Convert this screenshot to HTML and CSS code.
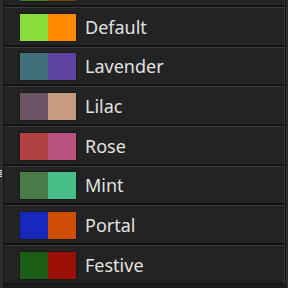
FILE: index.html
```html
<!doctype html>
<html lang="en">
  <head>
    <meta charset="UTF-8" />
    <title>Theme presets</title>
    <link rel="stylesheet" href="styles.css">
  </head>
  <body>
    <div class="panel">
      <div class="gutter">
        <span class="grip"></span>
      </div>
      <div class="preset-list">
        <!-- row scrolled mostly out of view, only its swatch edge shows -->
        <div class="preset dim">
          <div class="swatch">
            <span style="background:#4f7a24"></span>
            <span style="background:#7d4a0c"></span>
          </div>
        </div>
        <div class="preset">
          <div class="swatch">
            <span style="background:#8ade3b"></span>
            <span style="background:#ff8a00"></span>
          </div>
          <span class="preset-name">Default</span>
        </div>
        <div class="preset">
          <div class="swatch">
            <span style="background:#41707b"></span>
            <span style="background:#5f43a3"></span>
          </div>
          <span class="preset-name">Lavender</span>
        </div>
        <div class="preset">
          <div class="swatch">
            <span style="background:#6b5565"></span>
            <span style="background:#c49c80"></span>
          </div>
          <span class="preset-name">Lilac</span>
        </div>
        <div class="preset">
          <div class="swatch">
            <span style="background:#b14241"></span>
            <span style="background:#b8517e"></span>
          </div>
          <span class="preset-name">Rose</span>
        </div>
        <div class="preset">
          <div class="swatch">
            <span style="background:#4b7a49"></span>
            <span style="background:#47bd87"></span>
          </div>
          <span class="preset-name">Mint</span>
        </div>
        <div class="preset">
          <div class="swatch">
            <span style="background:#1428b9"></span>
            <span style="background:#d14f05"></span>
          </div>
          <span class="preset-name">Portal</span>
        </div>
        <div class="preset">
          <div class="swatch">
            <span style="background:#1b5e15"></span>
            <span style="background:#9c0f05"></span>
          </div>
          <span class="preset-name">Festive</span>
        </div>
      </div>
      <div class="edge"></div>
    </div>
  </body>
</html>
```

FILE: styles.css
```css
body {
  margin: 0;
  background: #1b1b1b;
  font-family: "Noto Sans", "Open Sans", sans-serif;
  overflow: hidden;
}

.panel {
  display: flex;
  height: 288px;
  overflow: hidden;
}

.gutter {
  position: relative;
  width: 3px;
  background: #2d2d2d;
  border-right: 1px solid #151515;
}

.grip {
  position: absolute;
  left: 0;
  top: 170px;
  width: 2px;
  height: 7px;
  background: repeating-linear-gradient(#d8d8d8 0 1px, #555 1px 2px);
}

.preset-list {
  flex: 1;
  margin-top: -32.67px;
}

.preset {
  display: flex;
  align-items: flex-start;
  box-sizing: border-box;
  height: 39.67px;
  padding: 4.7px 0 0 15px;
  background: #232323;
  border-top: 1px solid #383838;
  border-bottom: 2px solid #131313;
  border-right: 1px solid #3a3a3a;
}

.swatch {
  display: flex;
  width: 58px;
  height: 29px;
  box-sizing: border-box;
  border: 1px solid rgba(0, 0, 0, 0.25);
}

.swatch span {
  flex: 1;
}

.preset-name {
  margin-left: 8px;
  line-height: 29px;
  font-size: 18px;
  color: #e2e2e2;
}

.edge {
  width: 3px;
  background: #2b2b2b;
  border-left: 1px solid #121212;
  box-sizing: border-box;
}
```
